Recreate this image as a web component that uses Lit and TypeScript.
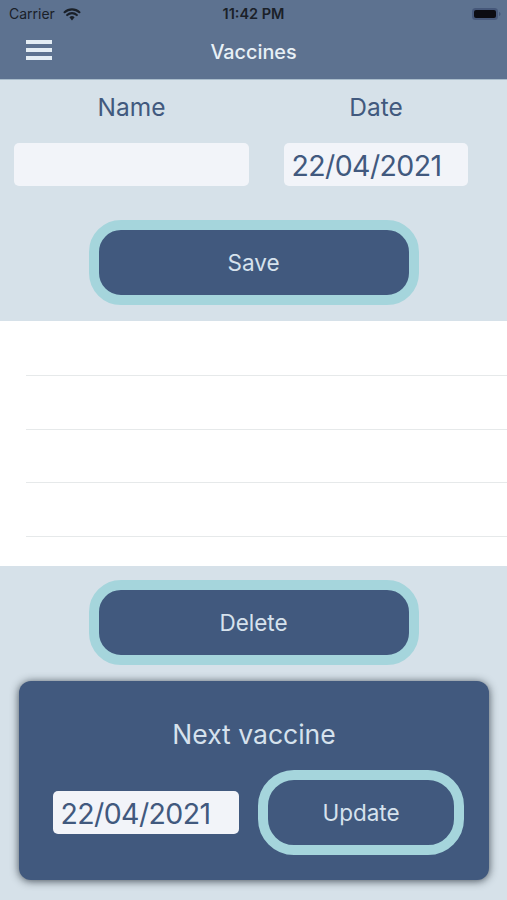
import { LitElement, html, css } from "lit";
import { customElement } from "lit/decorators.js";

@customElement("app-root")
export class AppRoot extends LitElement {
  static styles = css`
    :host {
      display: flex;
      flex-direction: column;
      width: 507px;
      height: 900px;
      overflow: hidden;
      background: #d6e1e9;
      font-family: Inter, "Liberation Sans", sans-serif;
      color: #41597e;
    }
    .header {
      height: 79px;
      flex: none;
      background: #5d7290;
      border-bottom: 1px solid #a9bccb;
      display: flex;
      flex-direction: column;
    }
    .status {
      height: 27px;
      display: grid;
      grid-template-columns: 1fr auto 1fr;
      align-items: center;
      padding: 0 5px;
      font-size: 14px;
      color: #1a2028;
    }
    .carrier { display: flex; align-items: center; gap: 8px; padding-left: 4px; }
    .time { font-weight: 600; font-size: 14.5px; }
    .battery { justify-self: end; display: block; margin-right: 1px; }
    .nav {
      flex: 1;
      display: flex;
      align-items: center;
      justify-content: center;
      position: relative;
      color: #e8f0f6;
      font-size: 19.8px;
      font-weight: 500;
      padding-bottom: 2px;
    }
    .menu {
      position: absolute;
      left: 26px;
      top: 13px;
      width: 26px;
      height: 20px;
      display: flex;
      flex-direction: column;
      justify-content: space-between;
    }
    .menu i { display: block; height: 4px; background: #e4edf4; }
    .fields {
      display: flex;
      padding: 0 0 0 14px;
      flex: none;
    }
    .col-name { width: 235px; margin-right: 35px; }
    .col-date { width: 184px; }
    .label {
      text-align: center;
      font-size: 24.5px;
      line-height: 28px;
      padding-top: 13px;
      height: 63px;
      box-sizing: border-box;
    }
    .input {
      height: 43px;
      box-sizing: border-box;
      background: #f2f4f9;
      border-radius: 5px;
      font-size: 28.5px;
      line-height: 45px;
      padding-left: 7.5px;
      color: #41597e;
      letter-spacing: -0.6px;
    }
    .btn-wrap { display: flex; justify-content: center; flex: none; }
    .btn {
      box-sizing: border-box;
      width: 330px;
      height: 85px;
      border: 10px solid #a5d5dc;
      border-radius: 32px;
      background: #41597e;
      color: #d6e2ed;
      font-size: 22.5px;
      display: flex;
      align-items: center;
      justify-content: center;
    }
    .save { margin-top: 34px; }
    .list {
      margin-top: 16px;
      height: 245px;
      flex: none;
      background: #fff;
      box-sizing: border-box;
      padding: 54px 0 0 26px;
      display: flex;
      flex-direction: column;
    }
    .row {
      height: 53.7px;
      flex: none;
      box-sizing: border-box;
      border-top: 1px solid #e6e9ea;
    }
    .delete { margin-top: 14px; }
    .card {
      margin: 16px 0 0 19px;
      width: 470px;
      height: 199px;
      box-sizing: border-box;
      background: #41597e;
      border-radius: 12px;
      box-shadow: 0 1px 9px rgba(30, 40, 50, 0.8);
      padding-top: 36px;
      display: flex;
      flex-direction: column;
      flex-shrink: 0;
    }
    .card-title {
      text-align: center;
      font-size: 26.5px;
      line-height: 34px;
      color: #d6e2ed;
    }
    .card-row {
      display: flex;
      align-items: center;
      margin-top: 19px;
      padding-left: 34px;
    }
    .card-date { width: 186px; margin-right: 19px; }
    .update {
      width: 206px;
      height: 85px;
      background: transparent;
      border-radius: 36px;
    }
  `;

  render() {
    return html`
      <div class="header">
        <div class="status">
          <div class="carrier">
            <span>Carrier</span>
            <svg width="18" height="14" viewBox="0 0 18 14" aria-hidden="true">
              <path d="M9 13.5 11.6 10.2a4 4 0 0 0-5.200 0z" fill="#1a2028"/>
              <path d="M1.600 5.200a11 11 0 0 1 14.800 0M4.200 8a7.300 7.300 0 0 1 9.600 0" fill="none" stroke="#1a2028" stroke-width="2.200" stroke-linecap="round"/>
            </svg>
          </div>
          <div class="time">11:42 PM</div>
          <svg class="battery" width="30" height="14" viewBox="0 0 30 14" aria-hidden="true">
            <rect x="1" y="1" width="26" height="12" rx="3.500" fill="#46587a"/>
            <rect x="3" y="3" width="22" height="8" rx="2" fill="#0c0c12"/>
            <path d="M28 5v4c1-.3 1.500-1 1.500-2s-.5-1.700-1.500-2z" fill="#46587a"/>
          </svg>
        </div>
        <div class="nav">
          <div class="menu"><i></i><i></i><i></i></div>
          Vaccines
        </div>
      </div>

      <div class="fields">
        <div class="col-name">
          <div class="label">Name</div>
          <div class="input"></div>
        </div>
        <div class="col-date">
          <div class="label">Date</div>
          <div class="input">22/04/2021</div>
        </div>
      </div>

      <div class="btn-wrap save"><div class="btn">Save</div></div>

      <div class="list">
        <div class="row"></div>
        <div class="row"></div>
        <div class="row"></div>
        <div class="row"></div>
      </div>

      <div class="btn-wrap delete"><div class="btn">Delete</div></div>

      <div class="card">
        <div class="card-title">Next vaccine</div>
        <div class="card-row">
          <div class="input card-date">22/04/2021</div>
          <div class="btn update">Update</div>
        </div>
      </div>
    `;
  }
}
